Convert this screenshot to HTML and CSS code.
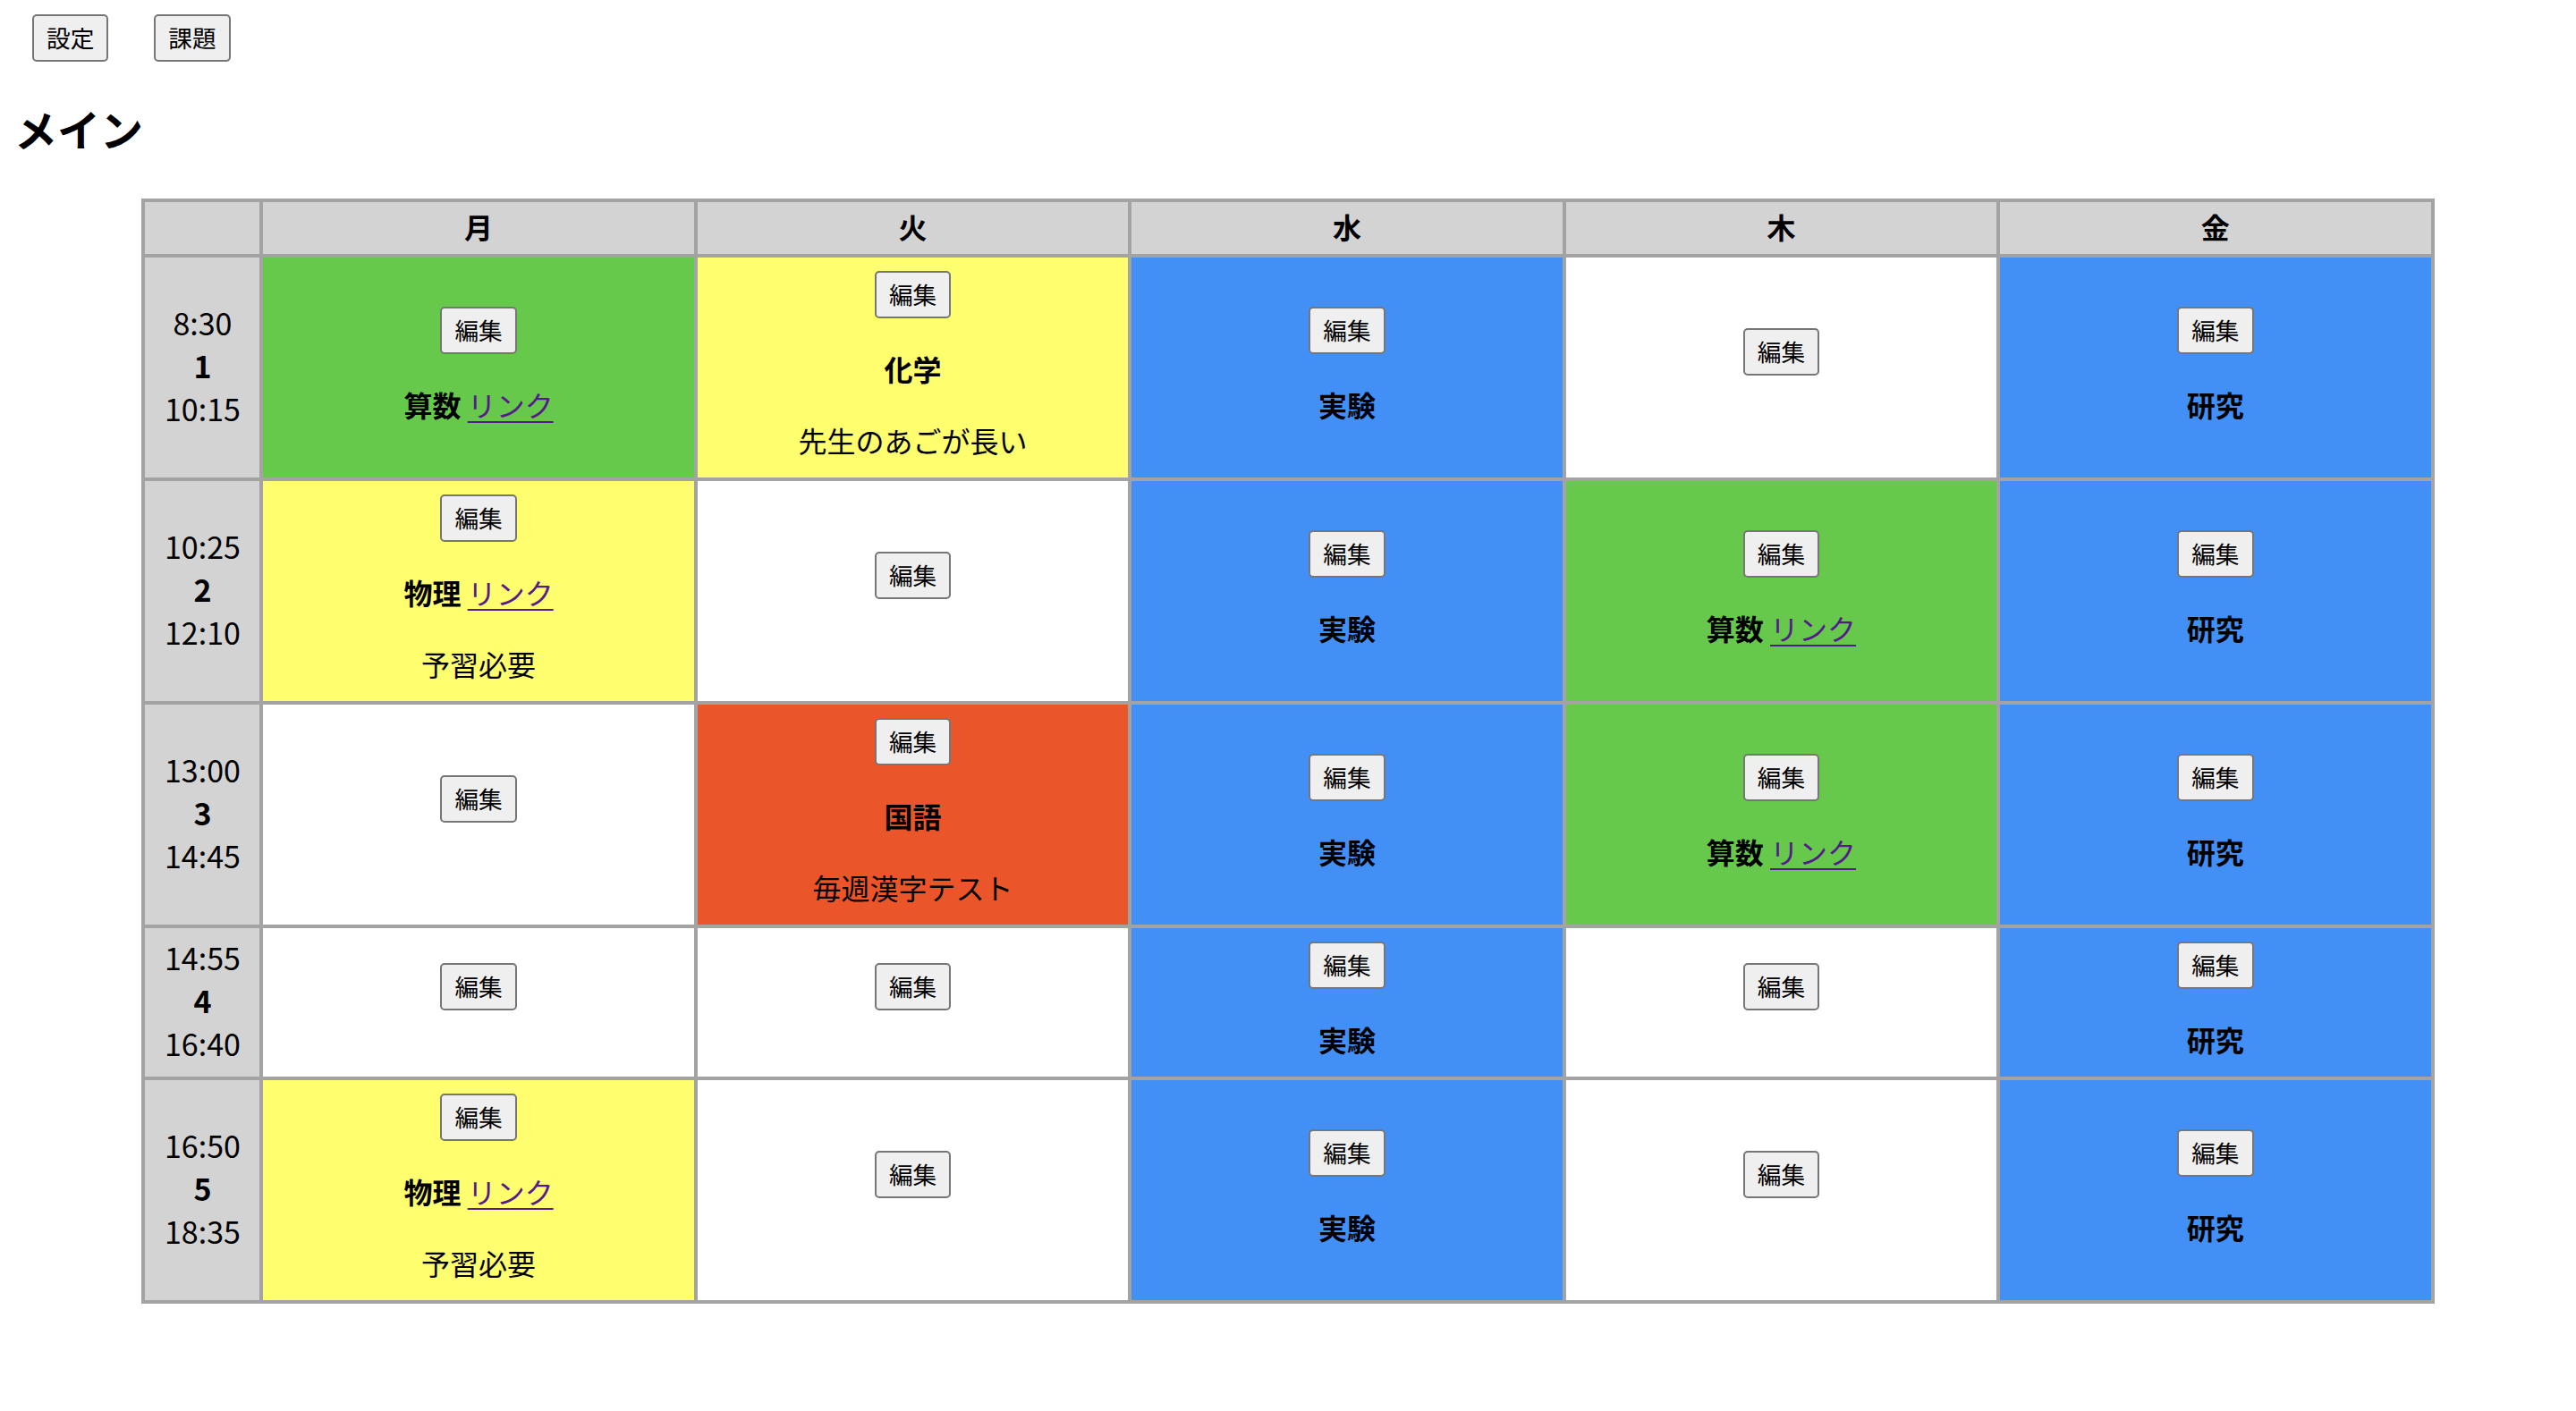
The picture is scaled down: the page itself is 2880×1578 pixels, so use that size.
FILE: index.html
```html
<!DOCTYPE html>
<html lang="ja">
<head>
<meta charset="utf-8">
<title>メイン</title>
<link rel="stylesheet" href="styles.css">
</head>
<body>
<div class="toolbar">
  <button class="btn">設定</button>
  <button class="btn">課題</button>
</div>
<h2 class="title">メイン</h2>
<table class="timetable">
  <thead>
    <tr>
      <th class="corner"></th>
      <th>月</th>
      <th>火</th>
      <th>水</th>
      <th>木</th>
      <th>金</th>
    </tr>
  </thead>
  <tbody>
    <tr>
      <td class="time"><div>8:30</div><div class="num">1</div><div>10:15</div></td>
      <td class="green"><div class="cell"><button class="btn">編集</button><div class="subj"><b>算数</b> <a href="#">リンク</a></div></div></td>
      <td class="yellow"><div class="cell"><button class="btn">編集</button><div class="subj"><b>化学</b></div><div class="note">先生のあごが長い</div></div></td>
      <td class="blue"><div class="cell"><button class="btn">編集</button><div class="subj"><b>実験</b></div></div></td>
      <td class="white"><div class="cell empty"><button class="btn">編集</button></div></td>
      <td class="blue"><div class="cell"><button class="btn">編集</button><div class="subj"><b>研究</b></div></div></td>
    </tr>
    <tr>
      <td class="time"><div>10:25</div><div class="num">2</div><div>12:10</div></td>
      <td class="yellow"><div class="cell"><button class="btn">編集</button><div class="subj"><b>物理</b> <a href="#">リンク</a></div><div class="note">予習必要</div></div></td>
      <td class="white"><div class="cell empty"><button class="btn">編集</button></div></td>
      <td class="blue"><div class="cell"><button class="btn">編集</button><div class="subj"><b>実験</b></div></div></td>
      <td class="green"><div class="cell"><button class="btn">編集</button><div class="subj"><b>算数</b> <a href="#">リンク</a></div></div></td>
      <td class="blue"><div class="cell"><button class="btn">編集</button><div class="subj"><b>研究</b></div></div></td>
    </tr>
    <tr>
      <td class="time"><div>13:00</div><div class="num">3</div><div>14:45</div></td>
      <td class="white"><div class="cell empty"><button class="btn">編集</button></div></td>
      <td class="red"><div class="cell"><button class="btn">編集</button><div class="subj"><b>国語</b></div><div class="note">毎週漢字テスト</div></div></td>
      <td class="blue"><div class="cell"><button class="btn">編集</button><div class="subj"><b>実験</b></div></div></td>
      <td class="green"><div class="cell"><button class="btn">編集</button><div class="subj"><b>算数</b> <a href="#">リンク</a></div></div></td>
      <td class="blue"><div class="cell"><button class="btn">編集</button><div class="subj"><b>研究</b></div></div></td>
    </tr>
    <tr>
      <td class="time"><div>14:55</div><div class="num">4</div><div>16:40</div></td>
      <td class="white"><div class="cell empty"><button class="btn">編集</button></div></td>
      <td class="white"><div class="cell empty"><button class="btn">編集</button></div></td>
      <td class="blue"><div class="cell"><button class="btn">編集</button><div class="subj"><b>実験</b></div></div></td>
      <td class="white"><div class="cell empty"><button class="btn">編集</button></div></td>
      <td class="blue"><div class="cell"><button class="btn">編集</button><div class="subj"><b>研究</b></div></div></td>
    </tr>
    <tr>
      <td class="time"><div>16:50</div><div class="num">5</div><div>18:35</div></td>
      <td class="yellow"><div class="cell"><button class="btn">編集</button><div class="subj"><b>物理</b> <a href="#">リンク</a></div><div class="note">予習必要</div></div></td>
      <td class="white"><div class="cell empty"><button class="btn">編集</button></div></td>
      <td class="blue"><div class="cell"><button class="btn">編集</button><div class="subj"><b>実験</b></div></div></td>
      <td class="white"><div class="cell empty"><button class="btn">編集</button></div></td>
      <td class="blue"><div class="cell"><button class="btn">編集</button><div class="subj"><b>研究</b></div></div></td>
    </tr>
  </tbody>
</table>
</body>
</html>
```

FILE: styles.css
```css
html, body {
  background: #ffffff;
}
body {
  margin: 16px;
  font-family: "Noto Sans CJK JP", "Noto Sans", sans-serif;
  font-size: 32px;
  line-height: 48px;
  color: #000000;
}
.toolbar {
  display: flex;
  gap: 51px;
  padding-left: 20px;
  height: 53px;
}
.btn {
  box-sizing: border-box;
  height: 53px;
  padding: 0 14px 2px 14px;
  border: 2px solid #767676;
  border-radius: 5px;
  background: #efefef;
  color: #000000;
  font-family: "Noto Sans CJK JP", "Noto Sans", sans-serif;
  font-size: 26.67px;
  line-height: 47px;
  margin: 0;
}
.title {
  font-size: 48px;
  line-height: 70px;
  font-weight: bold;
  margin: 39px 0 44px 0;
}
.timetable {
  width: 90%;
  margin: 0 auto;
  table-layout: fixed;
  border-collapse: separate;
  border-spacing: 0;
  border: 2px solid #a3a3a3;
}
.timetable th,
.timetable td {
  border: 2px solid #a3a3a3;
  text-align: center;
  vertical-align: middle;
}
.timetable th {
  background: #d3d3d3;
  padding: 3px 0 7px 0;
  font-weight: bold;
  line-height: 48px;
}
.timetable th.corner {
  width: 128px;
}
.timetable td {
  padding: 15px 8px 18px 8px;
}
.timetable td.time {
  background: #d3d3d3;
  padding: 0 0 4px 0;
  font-size: 34px;
}
.time .num {
  font-weight: bold;
}
.cell {
  display: flex;
  flex-direction: column;
  align-items: center;
  gap: 32px;
}
.cell.empty {
  padding-bottom: 32px;
}
.subj b {
  font-weight: bold;
}
.subj a {
  color: #551a8b;
  text-decoration: underline;
  text-decoration-thickness: 2px;
  text-underline-offset: 5px;
}
.green { background: #66c94c; }
.yellow { background: #fffe6e; }
.blue { background: #428ff5; }
.red { background: #ea5629; }
.white { background: #ffffff; }
```
